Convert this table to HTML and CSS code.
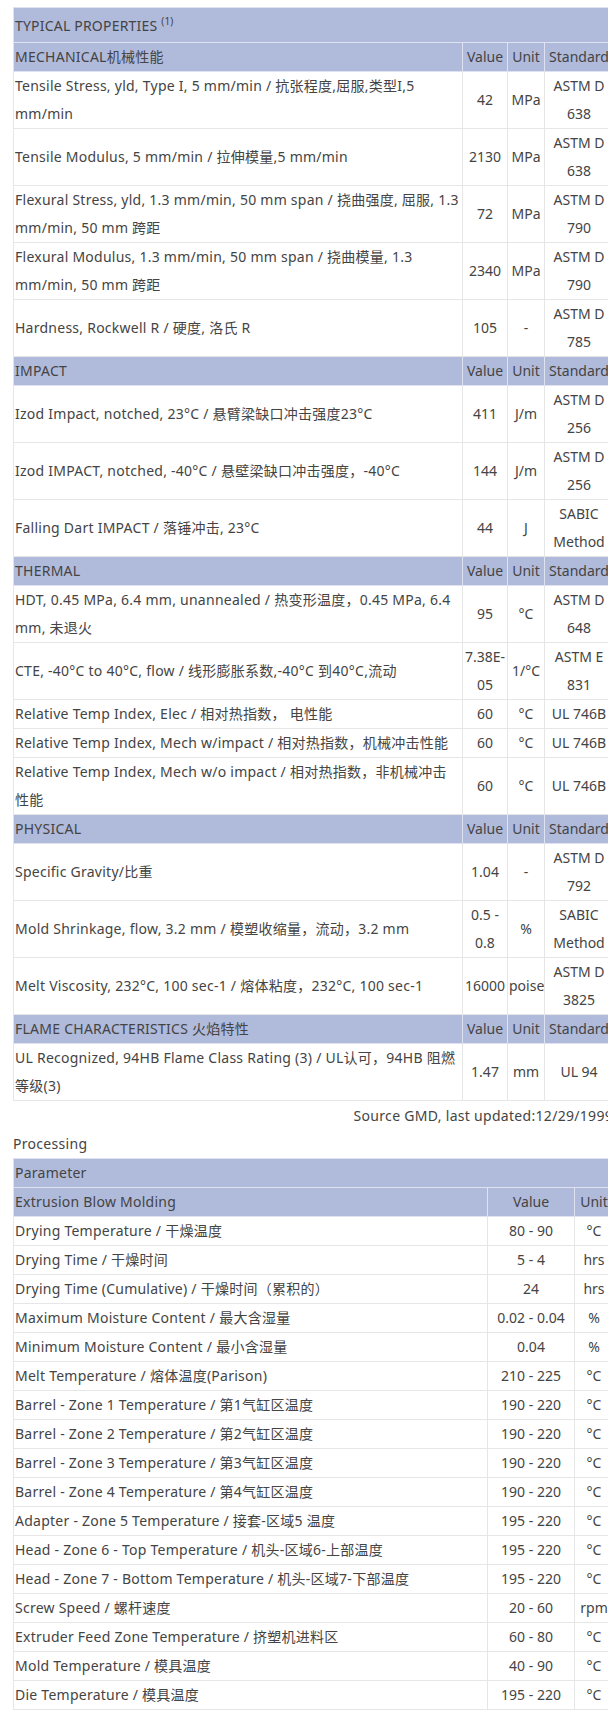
FILE: index.html
```html
<!DOCTYPE html>
<html lang="en">
<head>
<meta charset="utf-8">
<title>Typical Properties</title>
<link rel="stylesheet" href="styles.css">
</head>
<body>
<div class="page">
  <table class="grid props">
    <colgroup>
      <col class="c-name">
      <col class="c-val">
      <col class="c-unit">
      <col class="c-std">
    </colgroup>
    <tr class="title"><th colspan="4">TYPICAL PROPERTIES <sup>(1)</sup></th></tr>
    <tr class="sec"><th class="name">MECHANICAL机械性能</th><th>Value</th><th>Unit</th><th>Standard</th></tr>
    <tr><td class="name">Tensile Stress, yld, Type I, 5 mm/min / 抗张程度,屈服,类型I,5 mm/min</td><td>42</td><td>MPa</td><td>ASTM D 638</td></tr>
    <tr><td class="name">Tensile Modulus, 5 mm/min / 拉伸模量,5 mm/min</td><td>2130</td><td>MPa</td><td>ASTM D 638</td></tr>
    <tr><td class="name">Flexural Stress, yld, 1.3 mm/min, 50 mm span / 挠曲强度, 屈服, 1.3 mm/min, 50 mm 跨距</td><td>72</td><td>MPa</td><td>ASTM D 790</td></tr>
    <tr><td class="name">Flexural Modulus, 1.3 mm/min, 50 mm span / 挠曲模量, 1.3 mm/min, 50 mm 跨距</td><td>2340</td><td>MPa</td><td>ASTM D 790</td></tr>
    <tr><td class="name">Hardness, Rockwell R / 硬度, 洛氏 R</td><td>105</td><td>-</td><td>ASTM D 785</td></tr>
    <tr class="sec"><th class="name">IMPACT</th><th>Value</th><th>Unit</th><th>Standard</th></tr>
    <tr><td class="name">Izod Impact, notched, 23°C / 悬臂梁缺口冲击强度23°C</td><td>411</td><td>J/m</td><td>ASTM D 256</td></tr>
    <tr><td class="name">Izod IMPACT, notched, -40°C / 悬壁梁缺口冲击强度，-40°C</td><td>144</td><td>J/m</td><td>ASTM D 256</td></tr>
    <tr><td class="name">Falling Dart IMPACT / 落锤冲击, 23°C</td><td>44</td><td>J</td><td>SABIC Method</td></tr>
    <tr class="sec"><th class="name">THERMAL</th><th>Value</th><th>Unit</th><th>Standard</th></tr>
    <tr><td class="name">HDT, 0.45 MPa, 6.4 mm, unannealed / 热变形温度，0.45 MPa, 6.4 mm, 未退火</td><td>95</td><td>°C</td><td>ASTM D 648</td></tr>
    <tr><td class="name">CTE, -40°C to 40°C, flow / 线形膨胀系数,-40°C 到40°C,流动</td><td>7.38E-05</td><td>1/°C</td><td>ASTM E 831</td></tr>
    <tr><td class="name">Relative Temp Index, Elec / 相对热指数， 电性能</td><td>60</td><td>°C</td><td>UL 746B</td></tr>
    <tr><td class="name">Relative Temp Index, Mech w/impact / 相对热指数，机械冲击性能</td><td>60</td><td>°C</td><td>UL 746B</td></tr>
    <tr><td class="name">Relative Temp Index, Mech w/o impact / 相对热指数，非机械冲击<span class="nobr">性能</span></td><td>60</td><td>°C</td><td>UL 746B</td></tr>
    <tr class="sec"><th class="name">PHYSICAL</th><th>Value</th><th>Unit</th><th>Standard</th></tr>
    <tr><td class="name">Specific Gravity/比重</td><td>1.04</td><td>-</td><td>ASTM D 792</td></tr>
    <tr><td class="name">Mold Shrinkage, flow, 3.2 mm / 模塑收缩量，流动，3.2 mm</td><td>0.5 - 0.8</td><td>%</td><td>SABIC Method</td></tr>
    <tr><td class="name">Melt Viscosity, 232°C, 100 sec-1 / 熔体粘度，232°C, 100 sec-1</td><td>16000</td><td>poise</td><td>ASTM D 3825</td></tr>
    <tr class="sec"><th class="name">FLAME CHARACTERISTICS 火焰特性</th><th>Value</th><th>Unit</th><th>Standard</th></tr>
    <tr><td class="name">UL Recognized, 94HB Flame Class Rating (3) / UL认可，94HB 阻燃等级(3)</td><td>1.47</td><td>mm</td><td>UL 94</td></tr>
  </table>

  <div class="source">Source GMD, last updated:12/29/1999</div>
  <div class="caption">Processing</div>

  <table class="grid proc">
    <colgroup>
      <col class="p-name">
      <col class="p-val">
      <col class="p-unit">
    </colgroup>
    <tr class="sec"><th class="name" colspan="3">Parameter</th></tr>
    <tr class="sec"><th class="name">Extrusion Blow Molding</th><th>Value</th><th>Unit</th></tr>
    <tr><td class="name">Drying Temperature / 干燥温度</td><td>80 - 90</td><td>°C</td></tr>
    <tr><td class="name">Drying Time / 干燥时间</td><td>5 - 4</td><td>hrs</td></tr>
    <tr><td class="name">Drying Time (Cumulative) / 干燥时间（累积的）</td><td>24</td><td>hrs</td></tr>
    <tr><td class="name">Maximum Moisture Content / 最大含湿量</td><td>0.02 - 0.04</td><td>%</td></tr>
    <tr><td class="name">Minimum Moisture Content / 最小含湿量</td><td>0.04</td><td>%</td></tr>
    <tr><td class="name">Melt Temperature / 熔体温度(Parison)</td><td>210 - 225</td><td>°C</td></tr>
    <tr><td class="name">Barrel - Zone 1 Temperature / 第1气缸区温度</td><td>190 - 220</td><td>°C</td></tr>
    <tr><td class="name">Barrel - Zone 2 Temperature / 第2气缸区温度</td><td>190 - 220</td><td>°C</td></tr>
    <tr><td class="name">Barrel - Zone 3 Temperature / 第3气缸区温度</td><td>190 - 220</td><td>°C</td></tr>
    <tr><td class="name">Barrel - Zone 4 Temperature / 第4气缸区温度</td><td>190 - 220</td><td>°C</td></tr>
    <tr><td class="name">Adapter - Zone 5 Temperature / 接套-区域5 温度</td><td>195 - 220</td><td>°C</td></tr>
    <tr><td class="name">Head - Zone 6 - Top Temperature / 机头-区域6-上部温度</td><td>195 - 220</td><td>°C</td></tr>
    <tr><td class="name">Head - Zone 7 - Bottom Temperature / 机头-区域7-下部温度</td><td>195 - 220</td><td>°C</td></tr>
    <tr><td class="name">Screw Speed / 螺杆速度</td><td>20 - 60</td><td>rpm</td></tr>
    <tr><td class="name">Extruder Feed Zone Temperature / 挤塑机进料区</td><td>60 - 80</td><td>°C</td></tr>
    <tr><td class="name">Mold Temperature / 模具温度</td><td>40 - 90</td><td>°C</td></tr>
    <tr><td class="name">Die Temperature / 模具温度</td><td>195 - 220</td><td>°C</td></tr>
  </table>
</div>
</body>
</html>
```

FILE: styles.css
```css
html, body {
  margin: 0;
  padding: 0;
  overflow: hidden;
  background: #ffffff;
}

body {
  font-family: "Noto Sans", "Noto Sans CJK SC", sans-serif;
  font-size: 14px;
  color: #444444;
}

.page {
  width: 600px;
  padding: 7px 0 0 13px;
}

.grid {
  width: 600px;
  border-collapse: collapse;
  table-layout: fixed;
  border: 1px solid #333333;
}

.grid th,
.grid td {
  padding: 0 1px;
  line-height: 28px;
  text-align: center;
  vertical-align: middle;
  font-weight: normal;
  border: 1px solid #e6e6e6;
}

.grid th {
  background: #b0badb;
  border-color: #dfe3f1;
  color: #444444;
  white-space: nowrap;
}

.grid .name {
  text-align: left;
  letter-spacing: 0.25px;
}

.nobr {
  white-space: nowrap;
}

.grid .title th {
  text-align: left;
  letter-spacing: 0.2px;
  padding-top: 4px;
  padding-bottom: 2px;
}

.title sup {
  font-size: 10px;
  line-height: 0;
}

.c-name { width: 449px; }
.c-val { width: 45px; }
.c-unit { width: 37px; }
.c-std { width: 69px; }

.p-name { width: 474px; }
.p-val { width: 87px; }
.p-unit { width: 39px; }

.source {
  text-align: right;
  line-height: 28px;
  padding-top: 1px;
  letter-spacing: 0.3px;
}

.caption {
  line-height: 28px;
  letter-spacing: 0.3px;
}
```
